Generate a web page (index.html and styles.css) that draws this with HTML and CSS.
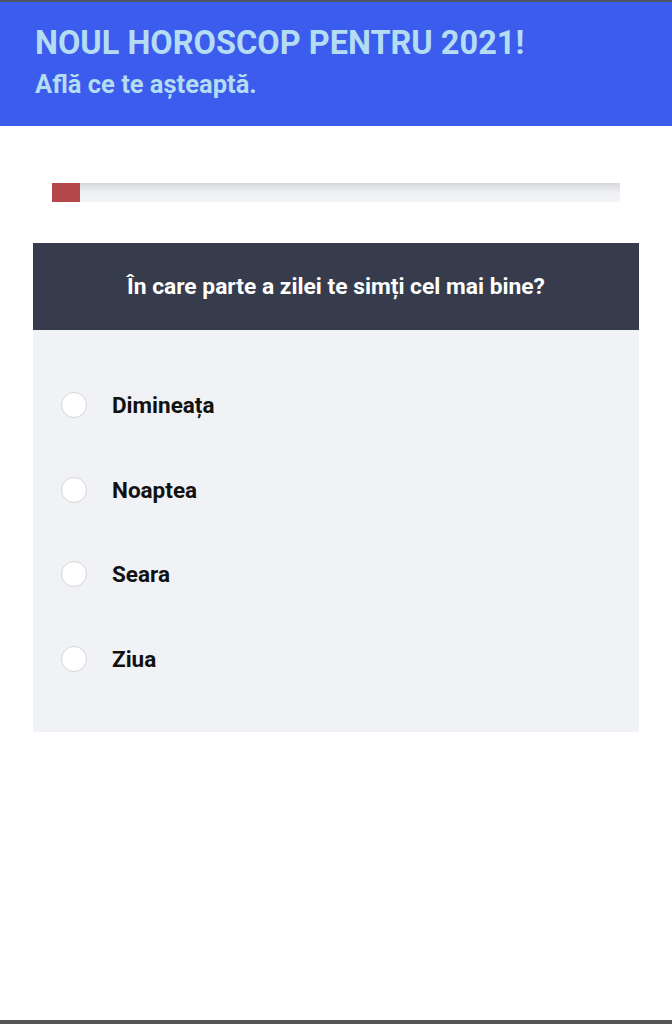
FILE: index.html
```html
<!DOCTYPE html>
<html lang="ro">
<head>
    <meta charset="UTF-8">
    <meta name="viewport" content="width=device-width, initial-scale=1.0">
    <title>Noul horoscop pentru 2021</title>
    <link rel="stylesheet" href="styles.css">
</head>
<body>
    <header class="top-header">
        <h1>NOUL HOROSCOP PENTRU 2021!</h1>
        <p>Află ce te așteaptă.</p>
    </header>

    <div class="progress">
        <div class="progress-fill" style="width: 5%"></div>
    </div>

    <div class="quiz-card">
        <div class="quiz-question">În care parte a zilei te simți cel mai bine?</div>
        <div class="quiz-options">
            <label class="option"><input type="radio" name="time"><span>Dimineața</span></label>
            <label class="option"><input type="radio" name="time"><span>Noaptea</span></label>
            <label class="option"><input type="radio" name="time"><span>Seara</span></label>
            <label class="option"><input type="radio" name="time"><span>Ziua</span></label>
        </div>
    </div>

    <div class="bottom-bar"></div>
</body>
</html>
```

FILE: styles.css
```css
body {
    font-family: Roboto, "Liberation Sans", sans-serif;
    background-color: #fff;
    margin: 0;
    min-height: 1024px;
    position: relative;
    border-top: 2px solid #4d5362;
    box-sizing: border-box;
}
.top-header {
    background-color: #3b5cec;
    padding: 21px 35px 26px;
}
.top-header h1 {
    margin: 0;
    color: #b4dcf2;
    font-size: 32.5px;
    font-weight: 700;
    line-height: 40px;
}
.top-header p {
    margin: 5px 0 0;
    color: #b4dcf2;
    font-size: 25.5px;
    font-weight: 700;
    line-height: 32px;
}
.progress {
    margin: 57px 52px 41px;
    height: 19px;
    background: linear-gradient(#d6d7dc 0, #e6e7eb 6px, #f1f2f5 10px, #f3f4f7 100%);
}
.progress-fill {
    height: 100%;
    background-color: #b3474a;
}
.quiz-card {
    margin: 0 33px;
    background-color: #f1f2f6;
}
.quiz-question {
    background-color: #373c4c;
    color: #fff;
    font-size: 22.8px;
    font-weight: 700;
    text-align: center;
    padding: 30px 20px;
    line-height: 27px;
}
.quiz-options {
    padding: 33px 28px 31px;
}
.option {
    display: flex;
    align-items: center;
    gap: 25px;
    height: 84.5px;
    font-size: 22.5px;
    font-weight: 700;
    color: #111;
    cursor: pointer;
}
.option input {
    appearance: none;
    -webkit-appearance: none;
    margin: 0;
    width: 26px;
    height: 26px;
    border-radius: 50%;
    border: 1.5px solid #d5d5d8;
    background-color: #fff;
    box-sizing: border-box;
}
.bottom-bar {
    position: absolute;
    left: 0;
    right: 0;
    bottom: 0;
    height: 4px;
    background-color: #555;
}
```
